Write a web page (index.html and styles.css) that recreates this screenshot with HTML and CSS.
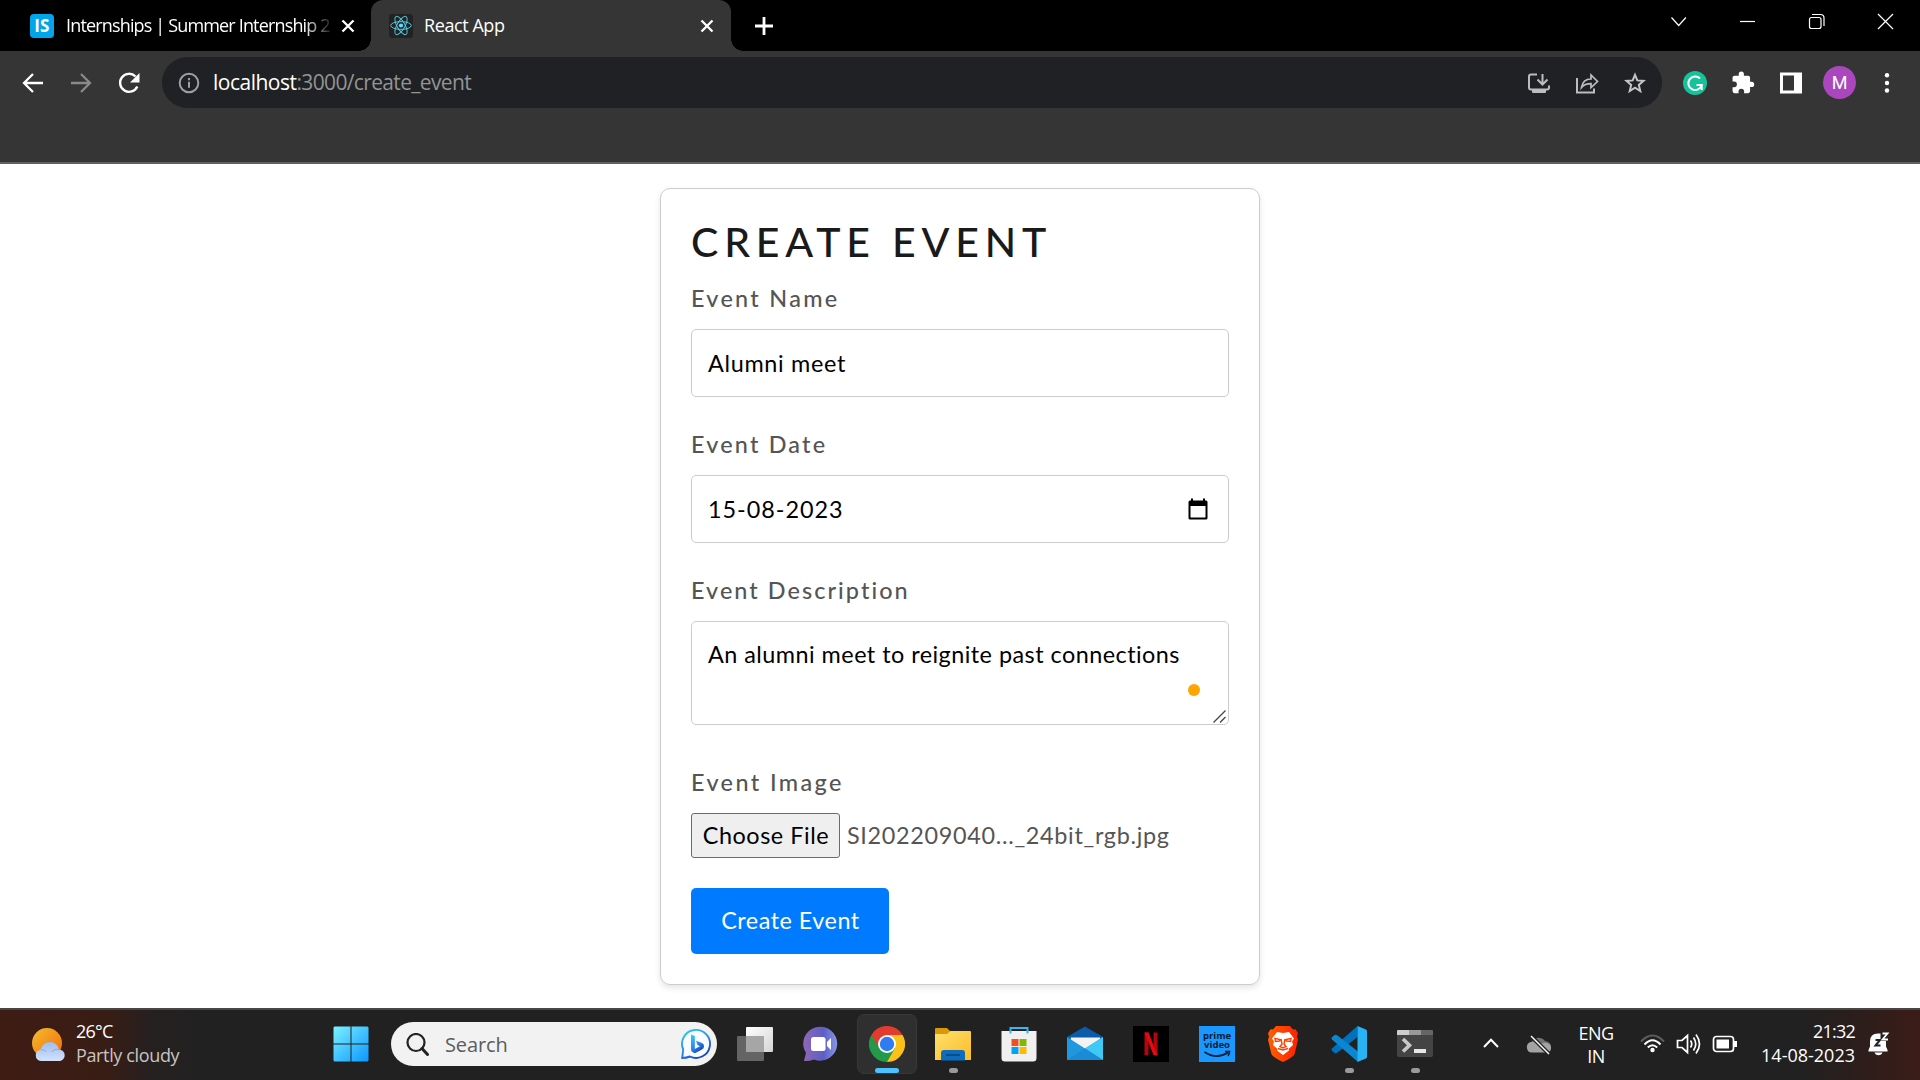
FILE: index.html
```html
<!DOCTYPE html>
<html lang="en">
<head>
<meta charset="utf-8">
<title>React App</title>
<link rel="stylesheet" href="styles.css">
</head>
<body>
<header class="browser">
  <div class="tabstrip">
    <div class="tab tab-idle">
      <svg class="favicon" width="24" height="24" viewBox="0 0 24 24"><rect width="24" height="24" rx="4" fill="#00a5ec"/><text x="11.8" y="18.3" text-anchor="middle" class="fav-text">IS</text></svg>
      <span class="tab-title fade">Internships | Summer Internship 2</span>
      <svg class="tab-close" width="14" height="14" viewBox="0 0 14 14"><path d="M1.5 1.5l11 11M12.5 1.5l-11 11" stroke="#fff" stroke-width="2.3"/></svg>
    </div>
    <div class="tab tab-active">
      <svg class="favicon" width="24" height="24" viewBox="0 0 24 24"><rect width="24" height="24" rx="3" fill="#222"/><g fill="none" stroke="#53c5e0" stroke-width="1"><ellipse cx="12" cy="11.5" rx="10.3" ry="3.9"/><ellipse cx="12" cy="11.5" rx="10.3" ry="3.9" transform="rotate(60 12 11.5)"/><ellipse cx="12" cy="11.5" rx="10.3" ry="3.9" transform="rotate(120 12 11.5)"/></g><circle cx="12" cy="11.5" r="2.1" fill="#61dafb"/></svg>
      <span class="tab-title">React App</span>
      <svg class="tab-close" width="14" height="14" viewBox="0 0 14 14"><path d="M1.5 1.5l11 11M12.5 1.5l-11 11" stroke="#fff" stroke-width="2.3"/></svg>
    </div>
    <svg class="new-tab" width="18" height="18" viewBox="0 0 18 18"><path d="M9 0v18M0 9h18" stroke="#fff" stroke-width="2.8"/></svg>
    <div class="window-buttons">
      <svg width="69" height="43" viewBox="0 0 69 43"><path d="M27.5 17.5l7.2 8 7.2-8"/></svg>
      <svg width="69" height="43" viewBox="0 0 69 43"><path d="M27 21.5h15"/></svg>
      <svg width="69" height="43" viewBox="0 0 69 43"><rect x="27.5" y="17.5" width="11.5" height="11" rx="2"/><path d="M30 14.5h8.5q3.500 0 3.500 3.500v8"/></svg>
      <svg width="69" height="43" viewBox="0 0 69 43"><path d="M27 14l15 15M42 14l-15 15"/></svg>
    </div>
  </div>
  <div class="toolbar">
    <svg class="tool" width="48" height="48" viewBox="0 0 48 48"><path d="M34 24H15.500M24 15l-9 9 9 9" fill="none" stroke="#fff" stroke-width="2.300"/></svg>
    <svg class="tool" width="48" height="48" viewBox="0 0 48 48"><path d="M14 24h18.500M24 15l9 9-9 9" fill="none" stroke="#8a8a8a" stroke-width="2.300"/></svg>
    <svg class="tool" width="48" height="48" viewBox="0 0 48 48"><path d="M32.300 27.500A9 9 0 1 1 30.500 17.500" fill="none" stroke="#fff" stroke-width="2.400"/><path d="M34.500 14v9.500H25z" fill="#fff"/></svg>
    <div class="omnibox">
      <svg class="info" width="22" height="22" viewBox="0 0 22 22"><circle cx="11" cy="11" r="9.300" fill="none" stroke="#9aa0a6" stroke-width="2"/><path d="M11 9.800v6M11 6v2.200" stroke="#9aa0a6" stroke-width="2"/></svg>
      <span class="url"><b>localhost</b>:3000/create_event</span>
      <div class="omni-actions">
        <svg width="48" height="48" viewBox="0 0 48 48"><path d="M22 15.500h-6q-2 0-2 2v11q0 2 2 2h16q2 0 2-2v-2M27.500 15v10M22.500 20.500l5 5 5-5" fill="none" stroke="#bdbdbd" stroke-width="2"/><path d="M17 30h14v3q0 1-1 1H18q-1 0-1-1z" fill="#bdbdbd"/></svg>
        <svg width="48" height="48" viewBox="0 0 48 48"><path d="M14 19v14.500h17v-4" fill="none" stroke="#bdbdbd" stroke-width="2"/><path d="M18.500 28.500c1-6.500 4.500-8.500 9.500-8.500v-4l6.500 6.500-6.500 6v-3.800c-4 0-7 .8-9.500 3.800z" fill="none" stroke="#bdbdbd" stroke-width="1.700"/></svg>
        <svg width="48" height="48" viewBox="0 0 48 48"><path d="M24 15.800l2.300 5.600 6.200.5-4.700 4 1.500 6.100-5.300-3.300-5.300 3.300 1.500-6.100-4.700-4 6.200-.5z" fill="none" stroke="#c4c4c4" stroke-width="2"/></svg>
      </div>
    </div>
    <div class="extensions">
      <svg width="48" height="48" viewBox="0 0 48 48"><circle cx="24" cy="24" r="12" fill="#15c39a"/><path d="M29 19.500a6.800 6.800 0 1 0 1.700 6.500H25.500M30.700 25v6" fill="none" stroke="#fff" stroke-width="2"/></svg>
      <svg width="48" height="48" viewBox="0 0 48 48"><path transform="translate(11.5 11.5) scale(1.03)" fill="#fff" d="M20.500 11H19V7c0-1.100-.9-2-2-2h-4V3.500a2.500 2.500 0 0 0-5 0V5H4c-1.100 0-2 .9-2 2v3.800h1.500a2.700 2.700 0 0 1 0 5.400H2V20c0 1.100.9 2 2 2h3.800v-1.500a2.700 2.700 0 0 1 5.400 0V22H17c1.100 0 2-.9 2-2v-4h1.500a2.500 2.500 0 0 0 0-5z"/></svg>
      <svg width="48" height="48" viewBox="0 0 48 48"><path fill="#fff" fill-rule="evenodd" d="M13 13.500h22v21H13zM16 16.500v15h11v-15z"/></svg>
      <span class="avatar">M</span>
      <svg width="48" height="48" viewBox="0 0 48 48"><g fill="#fff"><circle cx="24" cy="16.300" r="2.200"/><circle cx="24" cy="24" r="2.200"/><circle cx="24" cy="31.500" r="2.200"/></g></svg>
    </div>
  </div>
</header>

<main class="page">
  <form class="card">
    <h1>CREATE EVENT</h1>
    <label class="l-name">Event Name</label>
    <div class="field f-name">Alumni meet</div>
    <label class="l-date">Event Date</label>
    <div class="field f-date"><span>15-08-2023</span>
      <svg width="20" height="22" viewBox="0 0 20 22"><path fill="#000" fill-rule="evenodd" d="M3 .5h2v2h10v-2h2v2h1q1.500 0 1.500 1.500v16q0 1.500-1.500 1.500H2Q.5 21.500.5 20V4Q.5 2.500 2 2.500h1zM2.500 8v11.500h15V8z"/></svg>
    </div>
    <label class="l-desc">Event Description</label>
    <div class="field f-desc">An alumni meet to reignite past connections
      <span class="dot"></span>
      <svg class="grip" width="13" height="13" viewBox="0 0 13 13"><path d="M.5 12.500l12-12M7 12.500l5.500-5.500" stroke="#444" stroke-width="1.300"/></svg>
    </div>
    <label class="l-image">Event Image</label>
    <div class="file"><button type="button" class="choose">Choose File</button><span class="filename">SI202209040..._24bit_rgb.jpg</span></div>
    <button type="button" class="submit">Create Event</button>
  </form>
</main>

<footer class="taskbar">
  <div class="weather">
    <svg width="34" height="36" viewBox="0 0 34 36"><defs><linearGradient id="sun" x1="0" y1="0" x2="1" y2="1"><stop offset="0" stop-color="#f2bd2c"/><stop offset="1" stop-color="#f46a0c"/></linearGradient><linearGradient id="cloud" x1="0" y1="0" x2="0" y2="1"><stop offset="0" stop-color="#9dbdf0"/><stop offset="1" stop-color="#d3e2fa"/></linearGradient></defs><circle cx="15" cy="16" r="15" fill="url(#sun)"/><path d="M9 34a5.700 5.700 0 0 1-.5-11.300Q11 15 18 15t9 7.500A5.800 5.800 0 0 1 28 34z" fill="url(#cloud)"/><path d="M9 23q3-1 5 1.500M20 25q2-3.500 7-2.500" fill="none" stroke="#84a8e6"/></svg>
    <div class="weather-text"><span class="temp">26°C</span><span class="sky">Partly cloudy</span></div>
  </div>
  <div class="apps">
    <div class="app start"><svg width="36" height="36" viewBox="0 0 36 36"><defs><linearGradient id="win" gradientUnits="userSpaceOnUse" x1="0" y1="0" x2="36" y2="36"><stop offset="0" stop-color="#7df3ff"/><stop offset="1" stop-color="#0a95ff"/></linearGradient></defs><path fill="url(#win)" d="M1.500.5H17.500v17H.5v-16zM18.500.5h16l1 1v16h-17zM.5 18.500h17v17h-16l-1-1zM18.500 18.500h17v16l-1 1h-16z"/></svg></div>
    <div class="search">
      <svg width="23" height="23" viewBox="0 0 23 23"><circle cx="10" cy="9.500" r="8.500" fill="none" stroke="#222" stroke-width="2.200"/><path d="M16 15.500l5.500 6" stroke="#222" stroke-width="3" stroke-linecap="round"/></svg>
      <span>Search</span>
      <svg class="bing" width="32" height="32" viewBox="0 0 32 32"><defs><linearGradient id="bg" x1="0" y1="0" x2=".6" y2="1"><stop offset="0" stop-color="#2bd5f2"/><stop offset=".6" stop-color="#2f86e8"/><stop offset="1" stop-color="#1646b8"/></linearGradient></defs><path d="M2.200 30l1-8.500A14 14 0 1 1 10 28.500Q6 30 2.200 30z" fill="#f8fbff" stroke="url(#bg)" stroke-width="1.900"/><path d="M11 6.500l3.800 1.500v13l5.200-2.800-2.500-1.200-1.500-4.200 6 2.200q2 1 2 3.300t-2 3.200l-7 3.700q-4-1-4-3.700z" fill="url(#bg)"/></svg>
    </div>
    <div class="app"><svg width="36" height="36" viewBox="0 0 36 36"><defs><linearGradient id="tv" x1="0" y1="0" x2="1" y2="1"><stop offset="0" stop-color="#fff"/><stop offset="1" stop-color="#d4d4d4"/></linearGradient></defs><rect x="9" y="1" width="27" height="25" rx="1" fill="url(#tv)"/><rect x="0" y="10" width="27" height="25" rx="1" fill="#6e6e6e" fill-opacity=".87"/><path d="M9 10h18v16H9z" fill="#b0b0b0" fill-opacity=".8"/></svg></div>
    <div class="app"><svg width="36" height="36" viewBox="0 0 36 36"><defs><linearGradient id="chat" x1="0" y1="0" x2="1" y2="0"><stop offset="0" stop-color="#9067b4"/><stop offset=".6" stop-color="#5b5fc7"/><stop offset="1" stop-color="#8a97e0"/></linearGradient></defs><path d="M1 35l2-8A17 17 0 1 1 11 33.500Q6 35.500 1 35z" fill="url(#chat)"/><rect x="8" y="11" width="14.500" height="14" rx="2.500" fill="#fff"/><path d="M24 16l4-4v12l-4-4z" fill="#fff"/></svg></div>
    <div class="app current running"><svg width="36" height="36" viewBox="0 0 36 36"><path d="M18 18V9h15.600A18 18 0 0 1 18 36z" fill="#fbc116"/><path d="M18 18L2.400 9A18 18 0 0 0 18 36L25.800 22.500z" fill="#229a49"/><path d="M2.400 9A18 18 0 0 1 33.600 9H18L10.200 22.500z" fill="#e33b2e"/><circle cx="18" cy="18" r="9" fill="#fff"/><circle cx="18" cy="18" r="7.200" fill="#2f7cf0"/></svg></div>
    <div class="app running"><svg width="36" height="36" viewBox="0 0 36 36"><defs><linearGradient id="fold" x1="0" y1="0" x2="1" y2="1"><stop offset="0" stop-color="#ffdf70"/><stop offset="1" stop-color="#fcbd24"/></linearGradient></defs><path d="M0 10V3q0-1 1-1h11l3.500 3.500V10z" fill="#d99a06"/><path d="M0 8h12l3.500-3H35q1 0 1 1v28H0z" fill="url(#fold)"/><path d="M6 34.500V27q0-3 3-3h18q3 0 3 3v7.500z" fill="#0f6cbd"/><path d="M11 29h14" stroke="#0a4a86" stroke-width="1.800"/></svg></div>
    <div class="app"><svg width="36" height="36" viewBox="0 0 36 36"><path d="M.5 5h35v27q0 3.500-3.500 3.500H4Q.5 35.500.5 32z" fill="#f0f0f0"/><path d="M9.500 7.500V2h17v5.500" fill="none" stroke="#34b8ee" stroke-width="2"/><path d="M10.500 13h7v7h-7z" fill="#f25022"/><path d="M18.500 13h7v7h-7z" fill="#7fba00"/><path d="M10.500 21h7v7h-7z" fill="#00a4ef"/><path d="M18.500 21h7v7h-7z" fill="#ffb900"/></svg></div>
    <div class="app"><svg width="36" height="36" viewBox="0 0 36 36"><path d="M0 11L18 .5 36 11v8H0z" fill="#0b5dab"/><path d="M4 11.500h29v10L18 25 3 18z" fill="#f3f3f3"/><path d="M0 11l18 11.500L36 11v23H0z" fill="#1f98e0"/><path d="M36 11v23L18 22.500z" fill="#3dcaf6"/><path d="M0 34h36L18 22.500z" fill="#1b8bd8"/></svg></div>
    <div class="app"><svg width="36" height="36" viewBox="0 0 36 36"><path d="M0 0h36v36H0z" fill="#000"/><path d="M11.500 6.500h4V29l-4 .5zM20.500 6.500h4v23l-4-.5z" fill="#b1060f"/><path d="M11.500 6.500h4l9 23-4-.5z" fill="#e50914"/></svg></div>
    <div class="app"><svg width="36" height="36" viewBox="0 0 36 36"><path d="M0 0h36v36H0z" fill="#1a98ff"/><text x="18" y="12.500" text-anchor="middle" class="prime">prime</text><text x="18" y="22.300" text-anchor="middle" class="prime">video</text><path d="M5.500 26q12 8 23.500.5M26 25.500h4.500q0 2.500-1.500 4.500" fill="none" stroke="#001b33" stroke-width="1.600"/></svg></div>
    <div class="app"><svg width="36" height="36" viewBox="0 0 36 36"><defs><linearGradient id="brave" x1="0" y1="0" x2="1" y2="0"><stop offset="0" stop-color="#ff6000"/><stop offset="1" stop-color="#ff2000"/></linearGradient></defs><path d="M11 0h14l3 3.500 2.500-.3 2.500 4-1 3.500 1 3-3.500 14.500Q28.500 31 18 36 7.500 31 6.500 28.200L3 13.700l1-3-1-3.500 2.500-4 2.500.3z" fill="url(#brave)"/><path d="M12 6l6 1 6-1 5 6.500-2 3 1 3.500-4.500 4 .5 1.500-6 4.500-6-4.500.5-1.500L8 19l1-3.500-2-3z" fill="#fff"/><path d="M10 12.500l5 1-.5 1.500-4 .5zM26 12.500l-5 1 .5 1.500 4 .5zM16 13l1 5-2 2.500 3 1.500 3-1.500-2-2.500 1-5M13 22.500l5 1.500 5-1.500" fill="none" stroke="#ff4500" stroke-width="1.500"/></svg></div>
    <div class="app running"><svg width="36" height="36" viewBox="0 0 36 36"><path d="M1 22.500L26.500 0v11L6.500 26.500q-1.800 1.300-3.300.2L1 24.800q-1-1.200 0-2.300z" fill="#0072bd"/><path d="M1 13.500q-1-1.200 0-2.300l2.200-2q1.500-1.200 3.300.2l20.500 16V36z" fill="#0a86d2"/><path d="M26.500 0l8.400 3.600q1.100.5 1.100 1.700v25.400q0 1.200-1.100 1.700L26.500 36z" fill="#29b2f4"/></svg></div>
    <div class="app running"><svg width="36" height="36" viewBox="0 0 36 36"><path d="M0 9h36v20q0 2-2 2H2q-2 0-2-2z" fill="#444"/><path d="M1 4h11v5H0V5q0-1 1-1z" fill="#ccc"/><path d="M12 4h12v5H12z" fill="#999"/><path d="M24 4h11q1 0 1 1v4H24z" fill="#666"/><path d="M6 13l6.500 6.200L6 25.500" fill="none" stroke="#c8c8c8" stroke-width="3.600"/><path d="M17 23h12v4H17z" fill="#e6e6e6"/></svg></div>
  </div>
  <div class="tray">
    <svg class="up" width="16" height="10" viewBox="0 0 16 10"><path d="M1 9l7-7.200L15 9" fill="none" stroke="#fff" stroke-width="2"/></svg>
    <svg class="onedrive" width="26" height="20" viewBox="0 0 26 20"><path d="M6 17a5 5 0 0 1-.5-10A8 8 0 0 1 19 6q6 1 6 6t-5 5z" fill="#737373"/><path d="M6 17.500Q1 17.500 1 12q0-4 4-5 5-1 8 3 4-3 8-2 4 1 4 5t-4 4.500z" fill="#a3a3a3"/><path d="M5 1l18 18" stroke="#222" stroke-width="4"/><path d="M5 1l18 18" stroke="#fff" stroke-width="1.500"/></svg>
    <div class="lang"><span>ENG</span><span>IN</span></div>
    <svg class="wifi" width="25" height="20" viewBox="0 0 25 20"><g fill="none" stroke="#fff" stroke-width="2"><path d="M1 7.500q11.500-12 23 0" stroke="#5c5c5c"/><path d="M4.500 10.500q8-8.500 16 0M7.800 13.500q4.700-4.500 9.400 0"/></g><circle cx="12.500" cy="16" r="2.200" fill="#fff"/></svg>
    <svg class="volume" width="25" height="22" viewBox="0 0 25 22"><g fill="none" stroke="#fff" stroke-width="1.700"><path d="M1.500 7.500h4.500L11.500 2.500v17L6 14.500H1.500zM14.500 7.500q2.500 3.500 0 7M17.500 4.500q4.500 6.500 0 13M20 1.500q7 9.500 0 19"/></g></svg>
    <svg class="battery" width="26" height="18" viewBox="0 0 26 18"><rect x="1.500" y="1.500" width="20" height="15" rx="3" fill="none" stroke="#fff" stroke-width="1.700"/><rect x="4.500" y="4.500" width="12.500" height="9" fill="#fff"/><path d="M23.500 6v6" stroke="#fff" stroke-width="3"/></svg>
    <div class="clock"><span class="time">21:32</span><span>14-08-2023</span></div>
    <svg class="bell" width="22" height="24" viewBox="0 0 22 24"><path d="M10 1.500q-8 0-8 8v5L.5 18v1.500h19V18L18 14.500V9.500l-5-8zM6.500 20.500h8q-1 2.800-4 2.800t-4-2.800z" fill="#fff"/><path d="M12.500 0h7.500v9h-7.500z" fill="#222"/><path d="M7.500 8h4.500l-4.500 5.500h5" fill="none" stroke="#222" stroke-width="2"/><path d="M14.500 1.500h5l-5 6h5.500" fill="none" stroke="#fff" stroke-width="1.800"/></svg>
  </div>
</footer>
</body>
</html>
```
FILE: styles.css
```css
* { box-sizing: border-box; }
body {
  margin: 0;
  width: 1920px;
  height: 1080px;
  overflow: hidden;
  display: flex;
  flex-direction: column;
  background: #fff;
  font-family: "Open Sans", "Noto Sans", sans-serif;
}
svg { display: block; flex: none; }
button { margin: 0; padding: 0; font: inherit; }

/* Browser frame */
.browser { height: 164px; background: #353535; border-bottom: 2px solid #606060; }
.tabstrip { display: flex; height: 51px; background: #000; align-items: flex-start; }
.tab { display: flex; height: 51px; color: #fff; font-size: 18px; }
.tab-idle { width: 371px; padding-left: 30px; background: radial-gradient(circle at 0 0, #000 11.5px, #353535 12px) 359px 39px / 12px 12px no-repeat; }
.tab-active { position: relative; width: 360px; padding-left: 18px; background: #353535; border-radius: 12px 12px 0 0; }
.tab-active::after { content: ""; position: absolute; left: 100%; bottom: 0; width: 12px; height: 12px; background: radial-gradient(circle at 12px 0, #000 11.5px, #353535 12px); }
.favicon { margin-top: 14px; }
.fav-text { font: 700 17px "Open Sans", sans-serif; fill: #fff; }
.tab-title { margin-left: 11px; width: 266px; line-height: 50px; white-space: nowrap; letter-spacing: -0.42px; }
.tab-title.fade { margin-left: 12px; width: 265px; letter-spacing: -0.84px; -webkit-mask-image: linear-gradient(90deg, #000 238px, transparent 268px); mask-image: linear-gradient(90deg, #000 238px, transparent 268px); }
.tab-close { margin-top: 19px; margin-left: 10px; }
.new-tab { margin: 17px 0 0 24px; }
.window-buttons { display: flex; margin-left: auto; }
.window-buttons path, .window-buttons rect { fill: none; stroke: #fff; stroke-width: 1.2; }

.toolbar { display: flex; align-items: center; height: 51px; margin-top: 6px; padding-left: 9px; }
.omnibox { display: flex; align-items: center; width: 1500px; height: 51px; margin-left: 9px; padding: 0 3px 0 16px; border-radius: 26px; background: #202124; }
.url { margin-left: 13px; font-size: 21px; line-height: 50px; letter-spacing: -0.65px; color: #929495; padding-bottom: 1px; }
.url b { font-weight: 400; color: #fff; letter-spacing: -0.5px; }
.omni-actions { display: flex; margin-left: auto; }
.extensions { display: flex; align-items: center; margin-left: 9px; }
.avatar { width: 33px; height: 33px; margin: 0 7px 0 8px; border-radius: 50%; background: #ab47bc; color: #fff; font: 18px/33px Roboto, sans-serif; text-align: center; }

/* Form */
.page { height: 844px; padding-top: 24px; font-family: Lato, sans-serif; font-size: 23.4px; }
.card { width: 600px; height: 797px; margin: 0 auto; padding: 28px 30px 30px; border: 1px solid #ccc; border-radius: 10px; box-shadow: 0 3px 6px rgba(0, 0, 0, .1); display: flex; flex-direction: column; align-items: flex-start; }
.card h1 { margin: 0 0 16px; font-size: 41px; font-weight: 500; line-height: 50px; letter-spacing: 5.83px; color: #1a1a1a; }
.card label { margin-bottom: 16px; line-height: 30px; font-weight: 500; color: #555; }
.l-name { letter-spacing: 2.3px; }
.l-date { letter-spacing: 2.2px; }
.l-desc { letter-spacing: 2.06px; }
.l-image { letter-spacing: 2.4px; }
.field { position: relative; width: 538px; height: 68px; margin-bottom: 32px; padding: 0 15px 0 16px; border: 1px solid #ccc; border-radius: 5px; line-height: 66px; color: #000; white-space: nowrap; }
.f-name { letter-spacing: .69px; }
.f-date { display: flex; justify-content: space-between; align-items: center; padding-right: 20px; letter-spacing: .96px; }
.f-date span { padding-bottom: 1px; }
.f-desc { height: 104px; margin-bottom: 42px; padding-top: 17px; line-height: 30px; letter-spacing: .47px; }
.dot { position: absolute; right: 28px; bottom: 28px; width: 12px; height: 12px; border-radius: 50%; background: #ffa500; }
.grip { position: absolute; right: 2px; bottom: 1px; }
.file { display: flex; align-items: center; height: 45px; margin-bottom: 30px; }
.choose { width: 149px; height: 45px; padding: 0 0 2px 1px; border: 1px solid #6b6b6b; border-radius: 3px; background: #efefef; letter-spacing: .57px; color: #000; }
.filename { margin-left: 7px; padding-bottom: 2px; letter-spacing: .68px; color: #555; }
.submit { width: 198px; height: 66px; padding: 0 0 2px 1px; border: 0; border-radius: 5px; background: #007bff; color: #fff; letter-spacing: .5px; }

/* Taskbar */
.taskbar { display: flex; height: 72px; border-top: 2px solid #484746; background: linear-gradient(90deg, #3e1c14 0, #381d15 105px, #262020 150px, #212121 200px, #212121 1800px, #2a1e1c 1850px, #3b1c17 1920px); color: #fff; font-size: 18px; }
.weather { display: flex; width: 319px; padding: 17px 0 0 32px; }
.weather-text { display: flex; flex-direction: column; margin: -8px 0 0 10px; line-height: 24px; }
.temp { letter-spacing: -.76px; }
.sky { letter-spacing: -.36px; color: #c9c4c2; }
.apps { display: flex; padding-top: 4px; }
.app { position: relative; display: grid; place-items: center; width: 60px; height: 60px; margin: 0 3px; }
.app.start { margin-right: 10px; }
.current { background: #2f2f2f; border: 1px solid #383838; border-radius: 7px; }
.running::after { content: ""; position: absolute; left: 50%; bottom: 1px; width: 9px; height: 5px; margin-left: -4.5px; border-radius: 3px; background: #9a9a9a; }
.current::after { bottom: 0; width: 24px; margin-left: -12px; background: #4cc2ff; }
.search { display: flex; align-items: center; width: 326px; height: 44px; margin: 8px 5px 0 0; padding: 0 5px 0 15px; border-radius: 22px; background: #f2f2f2; color: #5c5c5c; font-size: 20px; }
.search span { margin-left: 16px; letter-spacing: -.11px; }
.bing { margin-left: auto; }
.prime { font: 700 9.5px "Open Sans", sans-serif; fill: #001b33; }
.tray { display: flex; flex: 1; padding: 0 30px 0 35px; }
.tray .up { margin-top: 28px; }
.tray .onedrive { margin: 25px 0 0 27px; }
.lang { display: flex; flex-direction: column; align-items: center; width: 60px; margin-left: 14px; padding-top: 12px; line-height: 23px; letter-spacing: -.5px; }
.tray .wifi { margin: 24px 0 0 14px; }
.tray .volume { margin: 23px 0 0 11px; }
.tray .battery { margin: 25px 0 0 11px; }
.clock { display: flex; flex-direction: column; align-items: flex-end; width: 117px; padding-top: 9px; line-height: 24px; }
.time { letter-spacing: -.76px; }
.tray .bell { margin: 22px 0 0 13px; }
```
